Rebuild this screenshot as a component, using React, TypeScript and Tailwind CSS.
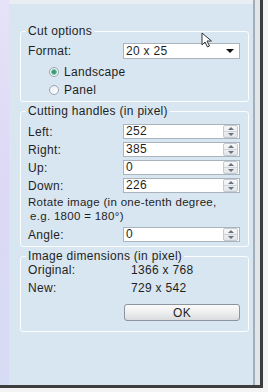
import React from 'react'

// Spin button pair drawn inside the numeric inputs
const Spinner: React.FC = () => (
  <div className="flex flex-col w-[15px] h-[13px] mr-[1px] border border-[#c3cad1] rounded-[2px] bg-gradient-to-b from-[#f6f7f8] to-[#e1e5e9]">
    <div className="flex-1 flex items-center justify-center border-b border-[#cfd5db]">
      <div className="w-0 h-0 border-l-[3px] border-r-[3px] border-b-[3px] border-l-transparent border-r-transparent border-b-[#6b747d]" />
    </div>
    <div className="flex-1 flex items-center justify-center">
      <div className="w-0 h-0 border-l-[3px] border-r-[3px] border-t-[3px] border-l-transparent border-r-transparent border-t-[#6b747d]" />
    </div>
  </div>
)

const NumberRow: React.FC<{ label: string; value: string }> = ({ label, value }) => (
  <div className="flex items-center h-[15px]">
    <span className="w-[95px]">{label}</span>
    <div className="flex items-center w-[117px] h-[15px] bg-white border border-[#abb4bd]">
      <span className="flex-1 pl-[2px] leading-[13px]">{value}</span>
      <Spinner />
    </div>
  </div>
)

const Radio: React.FC<{ checked?: boolean; label: string }> = ({ checked, label }) => (
  <div className="flex items-center h-[12px] pl-[21px]">
    <div className="flex items-center justify-center w-[10px] h-[10px] rounded-full border border-[#9aa5b0] bg-gradient-to-br from-[#e9edf0] to-[#ffffff]">
      {checked && <div className="w-[6px] h-[6px] rounded-full bg-[#2f9a70] border border-[#7cc9a6]" />}
    </div>
    <span className="ml-[5px]">{label}</span>
  </div>
)

const App: React.FC = () => {
  return (
    <div className="w-[268px] h-[392px] bg-[#f4f4f4] overflow-hidden font-['Liberation_Sans',sans-serif] text-[12px] text-[#1f1f1f] tracking-[0.3px]">
      <div className="flex h-[388px] w-[263px] border-b-[3px] border-[#3e3e3e]">
        <div className="w-[9px] bg-gradient-to-b from-[#e6e2f7] via-[#dcd8f5] to-[#d6dcf3]" />

        <div className="relative w-[244px] bg-[#d8e6f1] border-t-[4px] border-[#e9eef3]">
          {/* Cut options */}
          <fieldset className="ml-[11px] w-[229px] mt-[21px] border border-[#fbfdfe] rounded-[3px] pb-[5px]">
            <legend className="ml-[5px] px-[2px] leading-[13px]">Cut options</legend>
            <div className="pl-[7px]">
              <div className="flex items-center h-[15px] mt-[5px]">
                <span className="w-[95px]">Format:</span>
                <div className="flex items-center w-[117px] h-[16px] bg-white border border-[#abb4bd]">
                  <span className="flex-1 pl-[2px]">20 x 25</span>
                  <div className="mr-[5px] w-0 h-0 border-l-[4px] border-r-[4px] border-t-[4px] border-l-transparent border-r-transparent border-t-[#111]" />
                </div>
              </div>
              <div className="flex flex-col gap-[6px] mt-[8px]">
                <Radio checked label="Landscape" />
                <Radio label="Panel" />
              </div>
            </div>
          </fieldset>

          {/* Cutting handles */}
          <fieldset className="ml-[11px] w-[229px] mt-[3px] border border-[#fbfdfe] rounded-[3px] pb-[4px]">
            <legend className="ml-[5px] px-[2px] leading-[13px]">Cutting handles (in pixel)</legend>
            <div className="pl-[7px]">
              <div className="flex flex-col gap-[3px] mt-[6px]">
                <NumberRow label="Left:" value="252" />
                <NumberRow label="Right:" value="385" />
                <NumberRow label="Up:" value="0" />
                <NumberRow label="Down:" value="226" />
              </div>
              <div className="mt-[3px] text-[11.5px] leading-[13.5px]">
                <div>Rotate image (in one-tenth degree,</div>
                <div className="pl-[2px]">e.g. 1800 = 180°)</div>
              </div>
              <div className="mt-[4px]">
                <NumberRow label="Angle:" value="0" />
              </div>
            </div>
          </fieldset>

          {/* Image dimensions */}
          <fieldset className="ml-[11px] w-[229px] mt-[3px] border border-[#fbfdfe] rounded-[3px] pb-[10px]">
            <legend className="ml-[5px] px-[2px] leading-[13px]">Image dimensions (in pixel)</legend>
            <div className="pl-[7px]">
              <div className="flex items-center h-[13px]">
                <span className="w-[103px]">Original:</span>
                <span>1366 x 768</span>
              </div>
              <div className="flex items-center h-[13px] mt-[5px]">
                <span className="w-[103px]">New:</span>
                <span>729 x 542</span>
              </div>
              <button className="mt-[10px] ml-[96px] w-[116px] h-[17px] flex items-center justify-center rounded-[3px] border border-[#8c959e] bg-gradient-to-b from-[#fbfbfb] via-[#eeeeee] to-[#d9dcdf] leading-none">
                OK
              </button>
            </div>
          </fieldset>

          {/* mouse pointer over the panel */}
          <svg className="absolute left-[192px] top-[28px]" width="14" height="17" viewBox="0 0 14 17">
            <path d="M1 1 L1 13 L4 10 L6.5 15 L8.5 14 L6 9 L10.5 9 Z" fill="#fff" stroke="#333" strokeWidth="1" strokeLinejoin="round" />
          </svg>
        </div>

        <div className="w-[2px] bg-[#a3aeb8]" />
        <div className="w-[5px] bg-[#e2e5e8]" />
        <div className="w-[3px] bg-[#3c3c3c]" />
      </div>
    </div>
  )
}

export default App
